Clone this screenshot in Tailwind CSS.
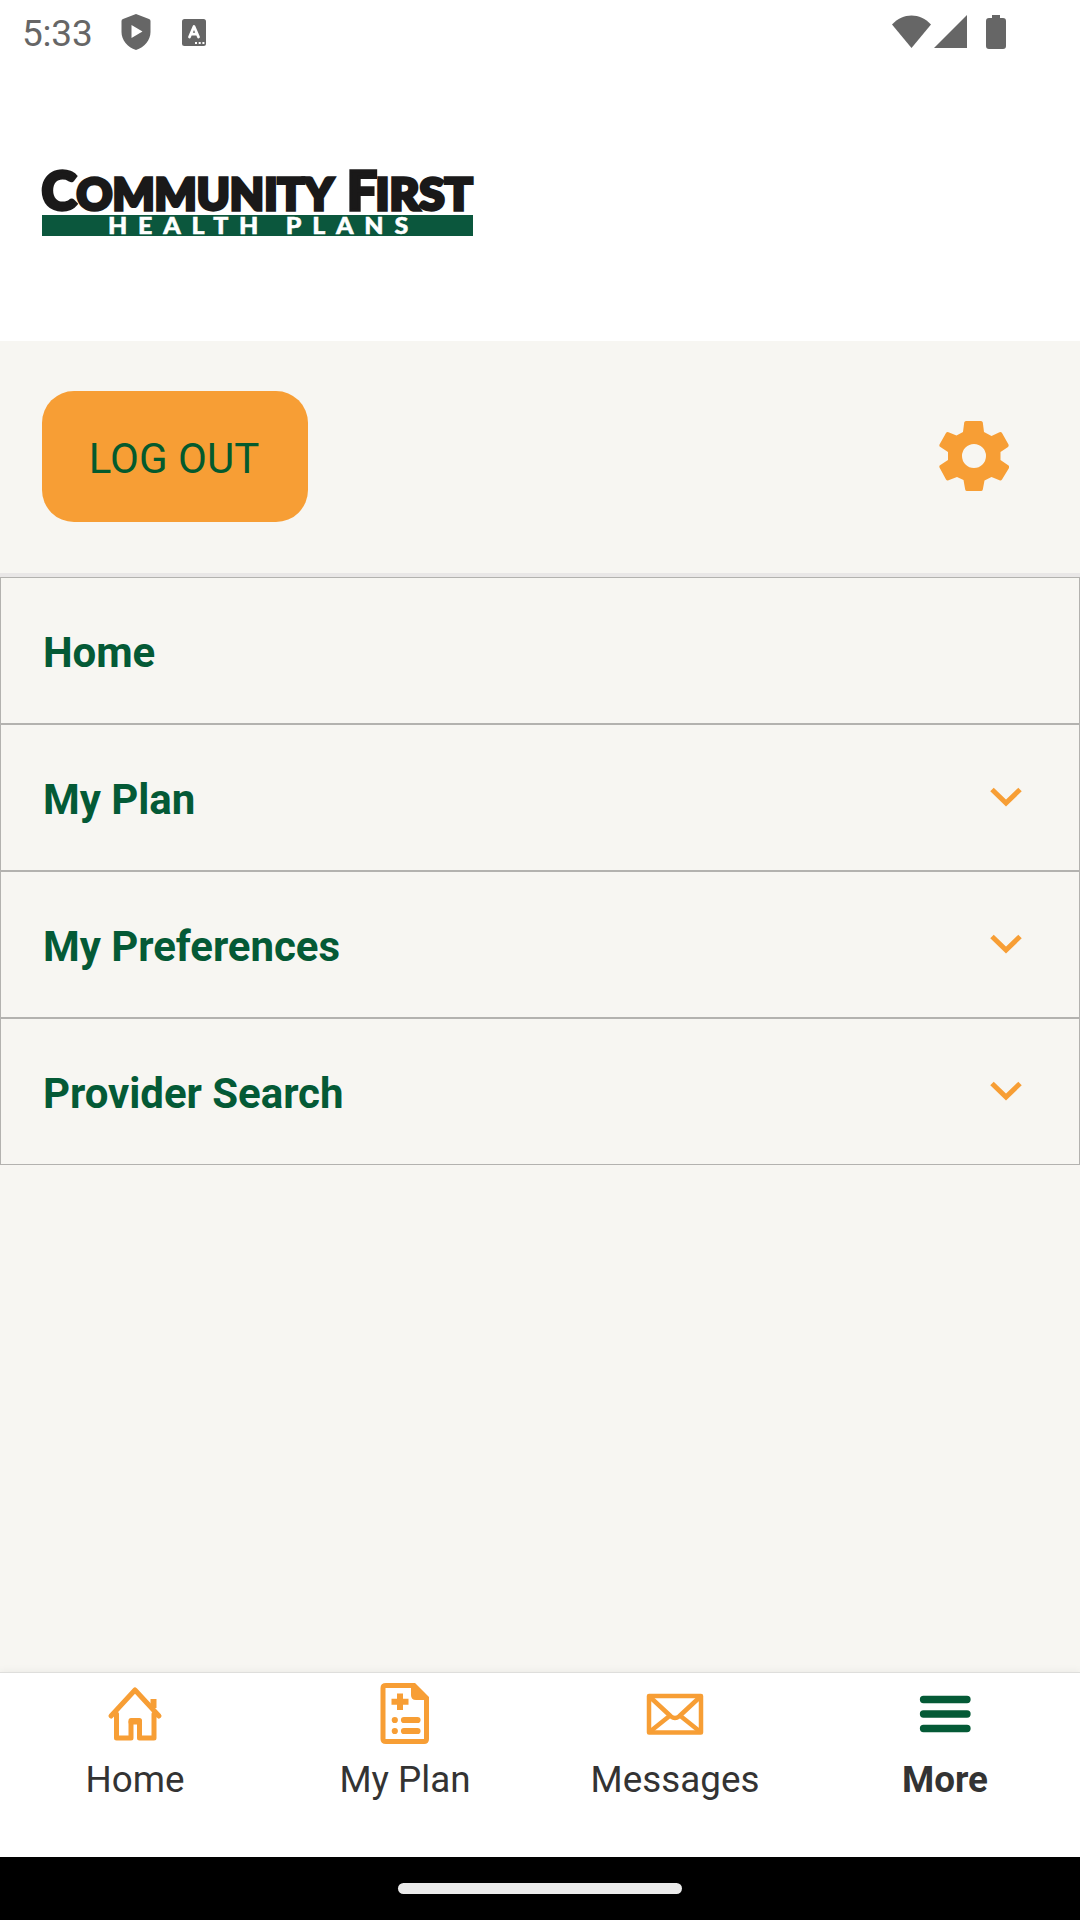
<!DOCTYPE html>
<html lang="en">
<head>
  <meta charset="UTF-8" />
  <meta name="viewport" content="width=device-width, initial-scale=1.0"/>
  <title>Community First Health Plans</title>
  <script src="https://cdn.jsdelivr.net/npm/@tailwindcss/browser@4"></script>
</head>
<body class="bg-[#f7f6f2] font-['Roboto',sans-serif]">
  <div class="flex h-[1920px] w-[1080px] flex-col overflow-hidden">
    <header class="h-[341px] shrink-0 bg-white">
      <!-- Status bar -->
      <div class="flex h-16 items-center justify-between pl-[22px] pr-[72px] text-[#666]">
        <div class="flex items-center">
          <span class="w-[99px] pt-[3px] text-[37px] leading-[61px] tracking-[-0.2px]">5:33</span>
          <svg class="h-9 w-[30px]" viewBox="0 0 30 36" fill="currentColor">
            <path fill-rule="evenodd" d="M15 0 28 5Q29.500 5.700 29.500 7V18C29.500 26 23.500 33.500 15 36 6.500 33.500.5 26 .5 18V7Q.5 5.700 2 5ZM10.500 11V24L21.500 17.500Z"/>
          </svg>
          <svg class="ml-[31px] h-[27px] w-6" viewBox="0 0 24 27">
            <rect width="24" height="27" rx="2.500" fill="currentColor"/>
            <path d="M7.500 18 12 7.500 16.500 18M9 15.200H15" fill="none" stroke="#fff" stroke-width="2.800" stroke-linecap="round" stroke-linejoin="round"/>
            <path d="M13 23h2v2h-2zM16.700 23h2v2h-2zM20.400 23h2v2h-2z" fill="#fff"/>
          </svg>
        </div>
        <svg class="h-[35px] w-[116px]" viewBox="0 0 116 35" fill="currentColor">
          <path d="M0 9.500C11-2.500 28-2.500 39 9.500L19.500 33Z"/>
          <path d="M42 33H75V0Z"/>
          <path d="M100 0H108V3H111Q114 3 114 6V31Q114 34 111 34H97Q94 34 94 31V6Q94 3 97 3H100Z"/>
        </svg>
      </div>
      <!-- Logo -->
      <svg class="mt-[81px] ml-10 h-[94px] w-[436px] font-['Lato',sans-serif]" viewBox="0 -20 436 94" role="img">
        <text y="44.500" fill="#1a1919" stroke="#1a1919" stroke-width="3.400" font-weight="900">
          <tspan x="1.500" font-size="54" textLength="35" lengthAdjust="spacingAndGlyphs">C</tspan><tspan x="36.500" font-size="44.500" textLength="257" lengthAdjust="spacingAndGlyphs">OMMUNITY</tspan>
          <tspan x="307" font-size="54" textLength="30" lengthAdjust="spacingAndGlyphs">F</tspan><tspan x="335.500" font-size="44.500" textLength="97" lengthAdjust="spacingAndGlyphs">IRST</tspan>
        </text>
        <rect x="2" y="50" width="431" height="21" fill="#0b573d"/>
        <text x="68" y="68.500" fill="#fff" stroke="#fff" stroke-width=".5" font-size="22" font-weight="900" letter-spacing="9.500" textLength="311" lengthAdjust="spacingAndGlyphs">HEALTH PLANS</text>
      </svg>
    </header>

    <section class="flex h-[236px] shrink-0 items-start justify-between border-b-4 border-[#e9e7e7] pt-[50px] pr-[71px] pl-[42px]">
      <button class="h-[131px] w-[266px] rounded-[32px] bg-[#f79e35] pt-1 pr-0.5 text-[42px] text-[#045a2d]">LOG OUT</button>
      <svg class="mt-[30px] h-[70px] w-[70px]" viewBox="0 0 70 70" fill="#f79e35">
        <path fill-rule="evenodd" d="M27 0H42Q43.500 0 43.800 1.500L45 11 52.500 15 60.500 11.300Q62 10.500 63 12L69.500 23.500Q70 25 69 26L61.500 31V39L69.500 44.500Q70.500 45.500 70 47L63 58.500Q62 60 60.500 59.200L52.500 56 45.500 59.500 43.800 68.500Q43.500 70 42 70H28Q26.500 70 26.200 68.500L24.500 59 18 56 9.500 59.200Q8 60 7 58.500L.5 46.500Q0 45 1 44.200L9 39V31L1 25.800Q0 25 .5 23.500L7 12Q8 10.500 9.500 11.300L17.500 14.500 24 11 25.200 1.500Q25.500 0 27 0ZM35 23A12 12 0 1 0 35 47 12 12 0 1 0 35 23Z"/>
      </svg>
    </section>

    <!-- Menu -->
    <ul class="shrink-0 text-[42px] font-bold tracking-[-0.05px] text-[#045a36]">
      <li class="flex h-[147px] items-center justify-between border border-[#b3b2af] pr-[57px] pl-[42px]"><span class="pt-1">Home</span></li>
      <li class="flex h-[147px] items-center justify-between border border-[#b3b2af] pr-[57px] pl-[42px]">
        <span class="pt-1">My Plan</span>
        <svg class="mb-0.5 h-5 w-8" viewBox="0 0 32 20" fill="none" stroke="#f79e35" stroke-width="5"><path d="M2 2.500 16 16 30 2.500"/></svg>
      </li>
      <li class="flex h-[147px] items-center justify-between border border-[#b3b2af] pr-[57px] pl-[42px]">
        <span class="pt-1">My Preferences</span>
        <svg class="mb-0.5 h-5 w-8" viewBox="0 0 32 20" fill="none" stroke="#f79e35" stroke-width="5"><path d="M2 2.500 16 16 30 2.500"/></svg>
      </li>
      <li class="flex h-[147px] items-center justify-between border border-[#b3b2af] pr-[57px] pl-[42px]">
        <span class="pt-1">Provider Search</span>
        <svg class="mb-0.5 h-5 w-8" viewBox="0 0 32 20" fill="none" stroke="#f79e35" stroke-width="5"><path d="M2 2.500 16 16 30 2.500"/></svg>
      </li>
    </ul>

    <!-- Bottom navigation -->
    <nav class="mt-auto grid h-[185px] shrink-0 grid-cols-4 border-t border-[#dededc] bg-white text-center text-[36.800px] text-[#333] shadow-[0_-1px_8px_rgba(0,0,0,0.05)]">
      <a class="flex flex-col items-center">
        <svg class="mt-2 h-16 w-[60px]" viewBox="0 0 60 64" fill="none" stroke="#f79e35" stroke-width="5" stroke-linecap="round" stroke-linejoin="round">
          <path d="M6 35 30 9 54 35M11.500 33V57H26V41H34.500V57H49V33"/>
          <path d="M48.500 27V18" stroke-linecap="butt" stroke-width="6"/>
          <path d="M26 41V39.500H34.500V41"/>
        </svg>
        <span class="mt-2.5 leading-[50px]">Home</span>
      </a>
      <a class="flex flex-col items-center">
        <svg class="mt-2 h-16 w-[50px]" viewBox="0 0 50 64" fill="none" stroke="#f79e35" stroke-width="5">
          <path d="M6 4.500H34L46.500 17V58Q46.500 60.500 44 60.500H6Q3 60.500 3 58V7Q3 4.500 6 4.500Z"/>
          <path d="M31 4H34L47 17V19H36Q31 19 31 14Z" fill="#f79e35" stroke="none"/>
          <path d="M20 12.500V29M11.500 20.700H28.500" stroke-width="6"/>
          <path d="M24 39H37.500M24 50H37.500M14.800 39h.01M14.800 50h.01" stroke-width="6.200" stroke-linecap="round"/>
        </svg>
        <span class="mt-2.5 leading-[50px]">My Plan</span>
      </a>
      <a class="flex flex-col items-center">
        <svg class="mt-2 h-16 w-[58px]" viewBox="0 0 58 64" fill="none" stroke="#f79e35" stroke-width="4.500" stroke-linejoin="round">
          <path d="M3 15H55V51.500H3Z"/>
          <path d="M4 16 25 35.500Q29 38.500 33 35.500L54 16M3.500 51 23.500 35M54.500 51 34.500 35"/>
        </svg>
        <span class="mt-2.5 leading-[50px]">Messages</span>
      </a>
      <a class="flex flex-col items-center font-bold">
        <svg class="mt-2 h-16 w-[52px]" viewBox="0 0 52 64" stroke="#045a36" stroke-width="7.300" stroke-linecap="round">
          <path d="M4.500 18.500H48M4.500 33H48M4.500 47.500H48"/>
        </svg>
        <span class="mt-2.5 leading-[50px]">More</span>
      </a>
    </nav>
    <footer class="flex h-[63px] shrink-0 justify-center bg-black pt-[26px]">
      <div class="h-[11px] w-[284px] rounded-full bg-[#ebebeb]"></div>
    </footer>
  </div>
</body>
</html>
